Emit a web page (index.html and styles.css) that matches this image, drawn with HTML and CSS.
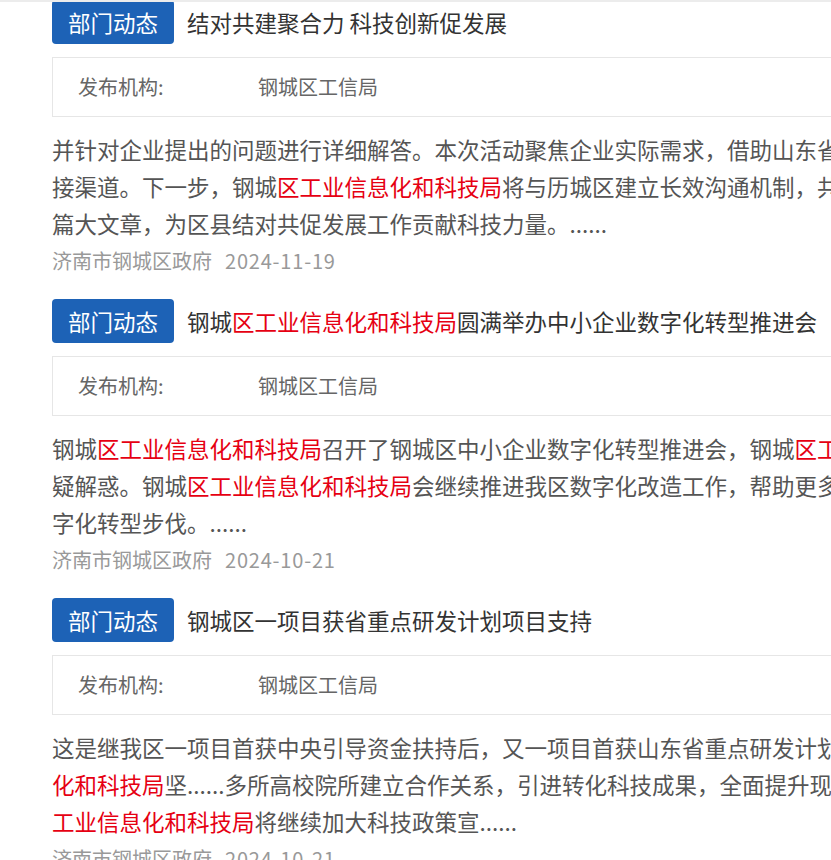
FILE: index.html
```html
<!DOCTYPE html>
<html lang="zh-CN">
<head>
<meta charset="utf-8">
<title>搜索结果</title>
<link rel="stylesheet" href="styles.css">
</head>
<body>
<div class="page-edge"></div>
<ul class="result-list">
  <li class="result">
    <div class="result-head">
      <span class="tag">部门动态</span>
      <a class="result-title" href="#">结对共建聚合力 科技创新促发展</a>
    </div>
    <div class="result-info">
      <span class="info-label">发布机构:</span>
      <span class="info-value">钢城区工信局</span>
    </div>
    <p class="result-summary">并针对企业提出的问题进行详细解答。本次活动聚焦企业实际需求，借助山东省科技资源为企业搭建直<br>接渠道。下一步，钢城<span class="hl">区工业信息化和科技局</span>将与历城区建立长效沟通机制，共同做好这<br>篇大文章，为区县结对共促发展工作贡献科技力量。......</p>
    <div class="result-meta">
      <span class="source">济南市钢城区政府</span>
      <span class="date">2024-11-19</span>
    </div>
  </li>
  <li class="result">
    <div class="result-head">
      <span class="tag">部门动态</span>
      <a class="result-title" href="#">钢城<span class="hl">区工业信息化和科技局</span>圆满举办中小企业数字化转型推进会</a>
    </div>
    <div class="result-info">
      <span class="info-label">发布机构:</span>
      <span class="info-value">钢城区工信局</span>
    </div>
    <p class="result-summary">钢城<span class="hl">区工业信息化和科技局</span>召开了钢城区中小企业数字化转型推进会，钢城<span class="hl">区工业信息化</span>答<br>疑解惑。钢城<span class="hl">区工业信息化和科技局</span>会继续推进我区数字化改造工作，帮助更多企业加快数<br>字化转型步伐。......</p>
    <div class="result-meta">
      <span class="source">济南市钢城区政府</span>
      <span class="date">2024-10-21</span>
    </div>
  </li>
  <li class="result">
    <div class="result-head">
      <span class="tag">部门动态</span>
      <a class="result-title" href="#">钢城区一项目获省重点研发计划项目支持</a>
    </div>
    <div class="result-info">
      <span class="info-label">发布机构:</span>
      <span class="info-value">钢城区工信局</span>
    </div>
    <p class="result-summary">这是继我区一项目首获中央引导资金扶持后，又一项目首获山东省重点研发计划支持。<span class="hl">区工业信息</span><br><span class="hl">化和科技局</span>坚......多所高校院所建立合作关系，引进转化科技成果，全面提升现代化水平。<span class="hl">区</span><br><span class="hl">工业信息化和科技局</span>将继续加大科技政策宣......</p>
    <div class="result-meta">
      <span class="source">济南市钢城区政府</span>
      <span class="date">2024-10-21</span>
    </div>
  </li>
</ul>
</body>
</html>
```

FILE: styles.css
```css
html, body {
  margin: 0;
  padding: 0;
  overflow: hidden;
  background: #ffffff;
  font-family: "Noto Sans CJK SC", "Noto Sans", sans-serif;
}

.page-edge {
  position: fixed;
  top: 0;
  left: 0;
  right: 0;
  height: 2px;
  background: #ececec;
  z-index: 2;
}

.result-list {
  list-style: none;
  margin: 0;
  padding: 0 0 0 52px;
  width: 1150px;
}

.result {
  margin: 0 0 20px;
}

.result-head {
  display: flex;
  align-items: center;
  gap: 13px;
  height: 44px;
}

.tag {
  display: block;
  height: 44px;
  line-height: 44px;
  padding: 0 16px;
  border-radius: 4px;
  background: #1d62b6;
  color: #ffffff;
  font-size: 22.5px;
  white-space: nowrap;
}

.result-title {
  color: #333333;
  font-size: 22.5px;
  line-height: 44px;
  text-decoration: none;
  white-space: nowrap;
}

.hl {
  color: #e60012;
}

.result-info {
  margin-top: 13px;
  border: 1px solid #e6e6e6;
  height: 58px;
  line-height: 58px;
  padding: 0 25px;
  font-size: 20px;
  color: #666666;
  display: flex;
}

.info-label {
  width: 180px;
  flex: none;
}

.result-summary {
  margin: 14px 0 0;
  font-size: 22.5px;
  line-height: 37px;
  color: #555555;
  white-space: nowrap;
}

.result-meta {
  display: flex;
  gap: 13px;
  font-size: 20px;
  line-height: 37px;
  color: #999999;
}

.date {
  letter-spacing: 0.8px;
}
```
